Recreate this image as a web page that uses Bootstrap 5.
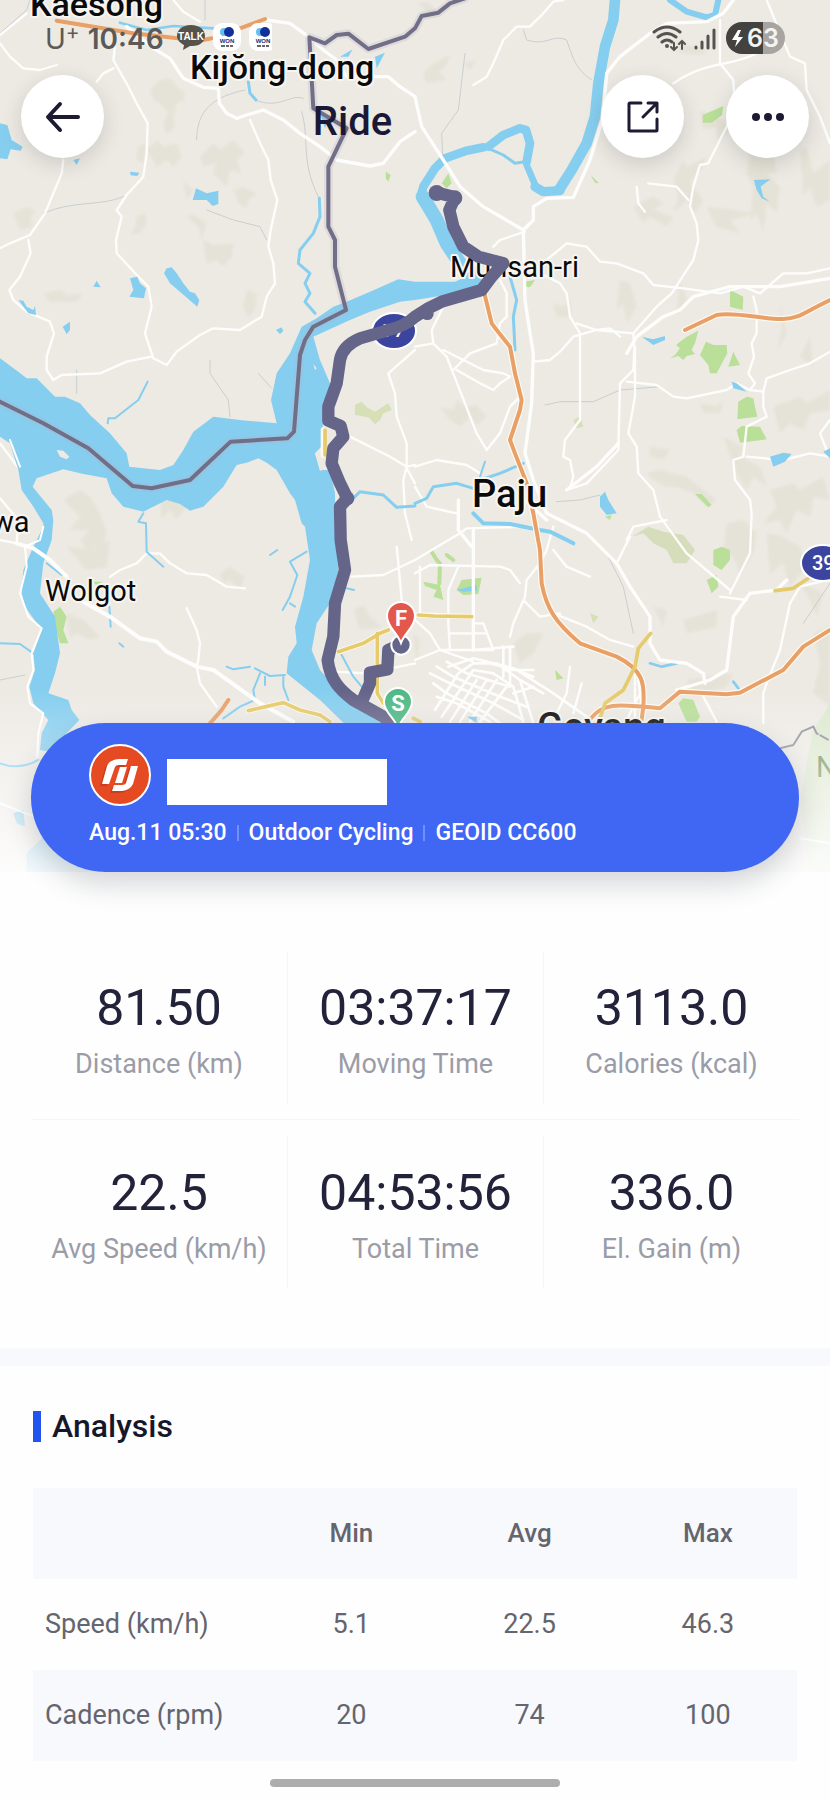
<!DOCTYPE html>
<html lang="en">
<head>
<meta charset="utf-8">
<meta name="viewport" content="width=device-width, initial-scale=1">
<title>Ride</title>
<link href="https://cdn.jsdelivr.net/npm/bootstrap@5.3.0/dist/css/bootstrap.min.css" rel="stylesheet">
<style>
  body { font-family: Roboto, sans-serif; color: #22233a; background: #fefefe; }
  .map-svg { background: #edeae4; }
  .map-svg text { font-family: Roboto, sans-serif; paint-order: stroke; stroke: #f7f5f1; stroke-width: 4px; stroke-linejoin: round; fill: #0a0a0a; }
  .map-svg text.on-fill { stroke: none; fill: #fff; }
  .map-svg text.park-name { fill: #6e8f58; stroke: none; }
  .town { font-size: 29px; }
  .city { font-size: 34px; font-weight: 500; }
  .city-lg { font-size: 38px; font-weight: 500; }
  .status-bar { height: 75px; padding: 21px 44px 0 45px; color: #5b5a58; }
  .status-bar .carrier { font: 400 28px/36px Inter, sans-serif; }
  .status-bar .clock { font: 600 28px/36px Inter, sans-serif; }
  .app-nav { padding: 0 21px; gap: 42px; }
  .round-btn { width: 83px; height: 83px; border: 0; background: #fff; color: #1c1b33; box-shadow: 0 6px 20px rgba(60, 60, 60, .18); }
  .screen-title { font-size: 40px; line-height: 48px; padding-top: 10px; font-weight: 500; color: #191936; }
  .ride-card { margin: -149px 31px 0; height: 149px; padding: 21px 58px 0; border-radius: 75px; background: #4066f4; color: #fff; box-shadow: 0 12px 28px rgba(40, 50, 60, .2); }
  .name-box { width: 220px; height: 46px; margin: 15px 0 0 16px; background: #fff; }
  .ride-meta { font-size: 23px; line-height: 28px; font-weight: 500; margin-top: 13px; gap: 10px; }
  .ride-meta .bar { width: 2px; height: 16px; background: #7390fa; }
  .stats { margin: 80px 31px 59px; }
  .stats .row + .row { border-top: 1px solid #f5f5f7; margin-top: 15px; padding-top: 15px; }
  .stat { height: 152px; padding-top: 28px; text-align: center; }
  .row + .row .stat { height: 154px; padding-top: 30px; }
  .stat + .stat { border-left: 1px solid #f5f5f7; }
  .stat dd { font-size: 50px; line-height: 56px; margin: 0; }
  .stat dt { font-size: 27px; line-height: 32px; margin-top: 12px; font-weight: 400; color: #9a9ca8; white-space: nowrap; }
  .section-gap { height: 18px; background: #f7f9fd; }
  .analysis { padding: 43px 33px 18px; }
  .analysis h2 { font-size: 32px; line-height: 34px; font-weight: 500; margin: 0 0 45px; gap: 11px; color: #17172b; }
  .analysis h2::before { content: ""; width: 8px; height: 31px; background: #2255f0; }
  .data-table { table-layout: fixed; width: 100%; font-size: 27px; line-height: 32px; color: #64656e; text-align: center; }
  .data-table th, .data-table td { height: 91px; padding: 0 12px 2px; }
  .data-table thead tr, .data-table tbody tr:nth-child(even) { background: #f7f9fd; }
  .data-table thead th { font-weight: 500; font-size: 26px; }
  .data-table tbody th { font-weight: 400; text-align: left; white-space: nowrap; }
  .data-table .lead-col { width: 30%; }
  .home-bar { width: 290px; height: 8px; border-radius: 4px; background: #adadad; margin-bottom: 12px; }
</style>
</head>
<body>
<header class="position-relative">
  <svg class="map-svg d-block w-100" viewBox="0 0 830 872" role="img" aria-label="Route map">
    <defs>
      <linearGradient id="fade" x1="0" y1="0" x2="0" y2="1"><stop offset="0" stop-color="#fefefe" stop-opacity="0"/><stop offset="1" stop-color="#fefefe" stop-opacity=".9"/></linearGradient>
      <filter id="soft" x="-20%" y="-20%" width="140%" height="140%"><feGaussianBlur stdDeviation="5"/></filter>
    </defs>
    <g transform="scale(.33333)" fill="none" stroke-linejoin="round" stroke-linecap="round">
      <!-- hill shading -->
      <g fill="#dfdccd" opacity=".55" filter="url(#soft)">
        <path d="M450 270L480 240 510 235 540 270 555 275 550 300 530 310 520 350 525 380 500 405 490 370 505 340 480 310 460 300ZM440 450L470 420 490 440 530 430 545 470 520 500 500 480 470 500ZM600 470L640 430 660 450 700 420 735 460 710 480 725 520 690 510 680 560 640 520 650 490 610 500ZM700 570L730 560 770 580 745 600 740 625 715 610ZM40 640L80 620 105 630 90 660 100 680 60 690ZM130 880L180 870 200 885 250 880 230 905 150 905ZM610 720L640 735 700 730 695 770 670 800 650 780 620 790ZM740 870L770 880 765 930 745 955 730 920ZM560 650L580 645 620 670 605 720 595 680ZM410 650L435 640 440 670 420 700 390 705 405 680ZM550 540L580 570 560 600ZM415 440L440 425 430 490 410 480Z"/>
        <path d="M1250 10L1280 5 1310 30 1300 50 1280 35ZM1270 220L1300 190 1350 165 1340 195 1315 215 1340 240 1280 250ZM1390 190L1430 180 1410 210ZM2020 540L2050 480 2060 500 2120 470 2110 500 2070 550 2110 600 2085 640 2060 600 2020 640 2035 590ZM2100 330L2170 360 2190 400 2150 420 2150 380 2110 390ZM2250 450L2290 470 2320 460 2330 520 2300 520 2340 560 2330 640 2300 610 2290 700 2270 640 2250 660 2260 560 2240 520ZM2400 450L2420 440 2440 520 2490 480V600L2450 620 2430 560 2410 590ZM2030 120L2080 140 2120 150 2110 165 2040 160ZM1900 620L1960 590 1990 610 1960 630 2020 650 2000 680 1950 650 1930 670ZM2120 620L2280 640 2190 660 2220 700 2150 680Z"/>
        <path d="M1320 1220L1360 1230 1370 1200 1400 1220 1430 1215 1460 1250 1430 1275 1410 1250 1380 1280 1350 1260ZM1860 840L1890 850 1910 920 1880 970 1870 910 1850 930ZM1940 1420L1980 1410 2060 1430 2150 1500 2120 1520 2080 1480 2030 1460 2000 1460 1960 1440ZM2170 1310L2230 1340 2220 1370 2280 1400 2300 1460 2260 1430 2240 1470 2210 1420ZM2320 1220L2400 1190 2420 1210 2490 1170V1230L2430 1240 2410 1290 2370 1270 2340 1300ZM2310 1470L2380 1450 2400 1470 2470 1430 2490 1500 2440 1490 2430 1550 2390 1530 2360 1600 2340 1560 2290 1570 2330 1520ZM2340 900L2360 1000 2330 1060 2345 990ZM2400 1070L2430 1010 2440 1100ZM1660 910L1690 920 1710 900 1710 950 1670 950ZM2100 1210L2150 1220 2170 1200 2160 1240 2110 1240ZM2040 840L2060 900 2030 950ZM1950 1340L2010 1350 1990 1380 1950 1370Z"/>
        <path d="M190 1500L240 1470 270 1490 300 1540 320 1600 310 1640 260 1650 240 1620 270 1590 210 1590 240 1550ZM200 1640L280 1650 330 1620 320 1700 260 1710ZM200 1840L250 1860 300 1910 270 1920 230 1900 210 1915ZM480 1500L520 1480 560 1520 530 1560 510 1530 485 1560ZM660 1720L690 1700 735 1730 720 1770 690 1740 670 1750ZM1060 1830L1090 1815 1110 1850 1145 1880 1080 1890ZM2180 1570L2230 1560 2270 1600 2260 1660 2220 1720 2200 1670 2170 1660ZM1540 1930L1580 1900 1630 1900 1600 1960 1560 1990ZM2440 1900L2490 1880V2120L2440 2080 2460 1990ZM2400 1750L2470 1780 2450 1850 2430 1800ZM2300 1600L2350 1610 2400 1640 2420 1700 2370 1760 2350 1690 2310 1720ZM1960 1820L2000 1830 1990 1880ZM2050 1860L2150 1830 2150 1880 2060 1900ZM2060 2040L2200 2020 2180 2060 2080 2090ZM1240 1900L1260 1920 1250 1990Z"/>
      </g>
      <!-- parks -->
      <g fill="#b9df98">
        <path d="M2108 345L2170 318 2166 345 2135 368 2108 368ZM1325 550L1345 520 1355 550 1340 565ZM1772 525L1797 550 1785 548ZM1158 515L1172 525 1165 545 1157 535Z"/>
        <path d="M2010 1075L2025 1065 2040 1045 2028 1035 2060 1010 2095 992 2085 1030 2075 1050 2085 1062 2060 1068 2050 1080 2035 1068ZM2100 1065L2118 1025 2140 1035 2180 1035 2182 1060 2150 1120 2130 1120 2125 1095ZM2200 1055L2220 1095 2185 1100ZM2190 870L2230 890 2228 930 2190 920ZM2215 1205L2240 1190 2260 1195 2265 1220 2272 1250 2212 1258ZM2210 1290L2225 1278 2280 1280 2300 1318 2220 1328ZM2085 1482L2105 1482 2135 1515 2125 1522ZM1576 845L1605 840 1590 862 1576 860ZM1815 1550L1835 1545 1830 1560Z"/>
        <path d="M2140 1650L2165 1640 2190 1650 2190 1680 2165 1710 2140 1695ZM2120 1740L2150 1725 2155 1760 2135 1780ZM1385 1740L1445 1733 1435 1782 1390 1785 1370 1770ZM1270 1745L1320 1755 1330 1800 1300 1790 1310 1770 1275 1758ZM2035 2110L2050 2095 2080 2100 2100 2150 2090 2165 2060 2165ZM160 1835L180 1820 200 1850 190 1890 205 1930 180 1930 165 1880ZM280 1745L305 1745 300 1770ZM1665 2010L1690 2035 1670 2040Z"/>
        <path d="M1295 1655L1310 1680 1320 1690 1318 1750M1340 1665L1360 1680" stroke="#b9df98" stroke-width="12" fill="none"/>
        <path d="M2440 2190L2480 2130 2490 2100V2616H2430L2400 2400 2420 2290Z" fill="#dce8cf"/>
        <path d="M1065 1215L1085 1205 1100 1222 1125 1235 1165 1210 1175 1230 1150 1240 1140 1260 1125 1272 1105 1252 1065 1245Z" fill="#d6dfb6"/>
        <path d="M1895 1610L1945 1580 1990 1595 2050 1605 2085 1650 2060 1690 2020 1690 2000 1650 1960 1630 1930 1600Z" fill="#d6ddbb"/>
        <path d="M1720 1260L1740 1250 1750 1280 1730 1285ZM1770 1840L1795 1850 1780 1870Z" fill="#d6dfb6"/>
        <path d="M150 2140L175 2160 155 2185Z" fill="#cfe39a"/>
      </g>
      <!-- small streams and admin lines -->
      <g stroke="#c9ced0" stroke-width="3">
        <path d="M0 100L80 30 90 0M615 0V60M590 420C590 330 640 290 735 270M765 300C840 330 870 280 910 295M905 335C930 420 900 480 955 590M130 640C220 600 300 620 370 590M620 630L700 660 780 680 800 720M230 1110V1180M630 1080V1120L685 1200 690 1250M775 1120L815 1165M0 2040L75 2025M1395 160L1375 330 1325 400 1328 465M1570 90L1580 120C1640 140 1660 100 1700 120 1720 180 1730 210 1775 240M1635 1215L1680 1205 1780 1205 1860 1170 1980 1160M1670 1505L1740 1500 1800 1485M1825 1670L1870 1760 1900 1900M2410 1870L2490 1750"/>
      </g>
      <!-- minor roads -->
      <g stroke="#fdfdfc" stroke-width="7">
        <path d="M0 105L80 40M0 130L30 170 70 205 120 210 170 195M345 140L340 180 385 260 410 310 443 370 440 460 430 530 380 585 350 630 365 650 348 720 350 760 415 830 445 860 455 920 435 1000 460 1075 500 1095 530 1055 600 1005 640 985 720 990 785 950 800 890 825 850 820 790 805 740 812 690 832 600 812 540 805 480 780 430 750 360M190 480L185 520 135 640 90 705 30 730 0 745M290 245L310 220 340 205M520 0L550 35 600 65M85 720L92 760 60 830 28 870 40 900 80 935 150 965 162 1000 140 1070 140 1110 160 1140 185 1125 300 1120 380 1085 455 1070"/>
        <path d="M1690 0L1660 5 1630 40 1590 80 1550 80 1510 120 1480 190 1460 230 1420 255M2300 0L2370 170 2415 190 2420 270 2460 350 2490 430M2160 60V190L2200 240 2205 330 2170 400 2125 490 2100 495 2080 560 2070 620 2090 670 2095 720 2080 780 2015 880M1910 560L1915 610 1935 635M1945 550L2030 560 2065 600M1575 695L1500 720 1480 740M2020 250C2120 180 2200 200 2270 160M1640 780L1700 730 1760 740 1800 785 1850 790 1930 820 1960 855 2050 865 2160 880 2230 860 2280 880 2350 820 2420 820 2490 805M1620 820L1680 850 1700 880 1710 950 1740 1000 1740 1260 1695 1320 1690 1370 1710 1380 1720 1430 1710 1465M1600 1085L1650 1080 1680 1055 1720 1010 1790 990 1830 985 1860 1010M1730 970L1790 990 1900 1000 1970 920 2015 880M1900 1000L1903 1040 1900 1110 1860 1150 1855 1350 1760 1450 1700 1470M1905 1040V1190L1885 1300 1910 1340 1915 1420 1960 1470 1980 1550 2060 1660 2190 1770M1880 1145L1970 1155 2020 1190 2060 1195 2180 1170 2210 1150 2250 1170 2290 1175 2300 1135 2370 1110 2430 1090 2490 1055M2260 890L2270 930 2270 1000 2255 1030 2262 1070 2245 1120 2265 1150 2250 1170M2290 1175L2290 1220 2300 1250 2240 1280 2230 1370 2200 1380 2205 1440 2250 1500 2255 1540 2250 1660 2230 1700 2190 1780M2240 1370L2350 1380 2430 1360 2490 1370M2490 1260L2460 1300 2480 1350"/>
        <path d="M1245 1040L1300 1030 1295 990 1340 900M1300 1030L1340 1070 1430 1300 1460 1350 1500 1300 1530 1220 1560 1190M1330 1050L1450 1110 1510 1120 1530 1130 1500 1150 1480 1170 1440 1150 1370 1110M1360 1110L1410 1060 1490 1030 1500 970 1520 950 1520 880 1500 840M1245 1400L1310 1380 1400 1395 1440 1420M1245 1460L1280 1520 1370 1540M1880 1620L1900 1580 2000 1560M2160 1790L2240 1800"/>
        <path d="M0 1495L55 1560 50 1630 0 1620M0 1330L60 1410M330 1730L360 1710 410 1690 440 1660 480 1660 510 1690 560 1720 620 1725 680 1760 735 1765M560 1825L590 1890 600 1930 595 1980 590 2000 600 2050 650 2120M1055 1730L1150 1725 1245 1680M1190 1640L1195 1690 1205 1800M1245 1050L1165 1120 1185 1180 1190 1250 1220 1330 1220 1400 1210 1440 1215 1540 1235 1620M1050 1310L1130 1350 1170 1370 1220 1400 1245 1395M1220 1405L1245 1450M1000 2015L1100 2020 1245 1990M1245 1680L1380 1600 1400 1585 1590 1580M1245 1720L1290 1695 1500 1700 1530 1710 1560 1750M1375 1700L1345 1770 1345 1870 1350 1950M1260 1700V1850M1350 1900H1460M1425 1870H1450L1480 1950M1660 1650L1700 1700 1770 1730M1245 1860L1290 1900 1320 1950 1420 1985M1245 1980L1320 1950 1480 1950M1660 1580L1640 1650 1620 1690 1580 1740 1575 1790 1540 1870 1530 1910M1660 1840L1760 1880 1830 1920 1900 1940M1570 1800L1620 1850 1680 1840M1710 2000L1700 2080 1670 2140M1745 2050L1720 2140M1850 1690L1890 1610M2480 1740L2400 1760 2370 1810 2340 1950 2300 2050 2290 2080 2290 2170M2110 2090L2150 2165"/>
        <path d="M1905 2000V2160M1915 2040L1930 2160M1885 2150L1930 2060"/>
      </g>
      <!-- dense street grid of the new town -->
      <g stroke="#fdfdfc" stroke-width="8">
        <path d="M1305 2130L1375 2020 1420 1990 1490 1990 1560 2040 1600 2170M1325 2150L1400 2040 1420 2010 1480 2020 1540 2060 1570 2165M1350 2165L1430 2040M1380 2165L1460 2040M1410 2165L1490 2040M1440 2165L1520 2060M1290 2020L1350 2050 1480 2110 1570 2160M1310 2000L1360 2030 1500 2090 1580 2120M1340 1985L1400 2020 1530 2060M1300 2050L1340 2080 1460 2140 1500 2170M1310 2090L1370 2110 1470 2165M1345 2000L1420 1975 1540 2005 1600 2030M1530 1940V2050M1510 1940V2030M1420 1950L1540 1940M1510 2010L1600 2010M1450 1985L1550 2010 1660 2080 1760 2150M1560 2040L1630 2080M1540 2080L1600 2060"/>
      </g>
      <!-- water -->
      <path fill="#86ceef" d="M0 1075L55 1115 80 1135 110 1135 165 1190 195 1190 240 1210 270 1245 330 1300 380 1360 388 1400 480 1410 520 1395 550 1350 580 1295 640 1250 720 1260 830 1270 813 1200 830 1120 870 1060 905 980 950 955 1000 920 1040 905 1110 875 1195 838 1245 845 1365 845 1430 815 1470 860 1430 875 1305 890 1245 900 1200 905 1110 935 1050 960 940 1010 960 1080 990 1150 970 1250 965 1340 945 1360 960 1410 990 1410 1005 1480 1005 1600 1015 1710 990 1810 950 1870 935 1950 960 2010 1040 2100 1180 2170 1180 2200 1060 2200 1030 2168 960 2100 860 2020 865 1970 890 1930 885 1880 910 1790 930 1680 915 1580 905 1570 885 1500 870 1480 830 1410 800 1388 775 1375 740 1388 710 1395 670 1460 610 1520 570 1532 540 1512 500 1500 430 1535 370 1520 335 1480 320 1435 250 1422 190 1408 110 1435 98 1460 155 1530 160 1560 155 1620 130 1690 120 1780 165 1850 180 1960 165 2020 145 2080 205 2100 215 2130 238 2160 200 2200 170 2260 120 2250 125 2200 145 2160 100 2110 88 2060 105 2010 100 1960 125 1890 75 1820 65 1780 70 1710 100 1640 130 1580 130 1570 100 1520 65 1470 55 1410 30 1330 0 1310Z"/>
      <g fill="#edeae4"><path d="M170 1350L190 1352 208 1370 200 1378 180 1370ZM940 1092L950 1105 945 1110ZM945 1360L965 1340 985 1345 990 1405 960 1412Z"/></g>
      <g stroke="#86ceef">
        <path stroke-width="32" d="M1845 0L1840 60 1815 140 1795 250 1785 350 1760 430 1715 510 1680 565"/>
        <path stroke-width="28" d="M1680 572L1630 575 1605 560"/>
        <path stroke-width="20" d="M1610 565L1580 495"/>
        <path stroke-width="26" d="M1580 485L1590 430 1578 390 1560 385 1510 405 1465 440"/>
        <path stroke-width="26" d="M1450 442L1400 452 1335 475 1305 505 1270 560 1262 590"/>
        <path stroke-width="42" d="M1268 590L1310 660 1340 730 1380 790 1430 830"/>
        <path stroke-width="9" d="M1465 445L1510 465 1545 490 1575 485"/>
        <path stroke-width="18" d="M2010 0L2060 35 2120 52 2145 45 2155 0"/>
        <path stroke-width="9" d="M958 595L960 650 940 700 900 750 895 790 930 820 915 850 930 880 915 905 945 940M745 245L750 280 768 300M1530 830L1550 900 1540 950 1545 1050M1245 1510L1280 1495 1300 1460 1370 1450 1420 1465M1440 1440L1500 1420 1570 1390M1060 1495L1080 1475 1150 1485 1190 1522 1245 1518"/>
        <path stroke-width="12" d="M1420 1540L1450 1570 1530 1572 1620 1590 1650 1595 1720 1630"/>
        <path stroke-width="6" d="M1440 1430L1455 1385M443 1145L415 1200 345 1255 325 1255 323 1270M430 1540L415 1565 438 1570 440 1655 490 1700M920 1655L870 1685 892 1725 870 1790 848 1830M870 1810L885 1820M810 1665L832 1650M0 1930L60 1932 100 1960M140 1690L185 1725M328 1820L332 1880M358 1930L370 1940M680 2000L700 2008 750 2000M765 2005L810 2028 855 2025M780 2020L760 2070 765 2100 720 2120 670 2155M850 2030L850 2060 865 2100M795 2030V2055M1025 1965L1060 2030 1085 2060M1040 1765L1062 1770M0 2290C40 2305 80 2300 115 2280"/>
        <path stroke-width="8" d="M360 68L440 90 520 78 640 85M1950 1990L1985 2000 2030 1990M2200 2045L2215 2065"/>
      </g>
      <g fill="#86ceef"><path d="M0 370L22 375 35 420 68 440 62 452 32 448 22 478 0 475ZM220 480L240 475 230 495ZM390 515L418 518 412 528 392 526ZM588 565L620 580 655 572 655 612 638 618 620 600 578 600ZM500 805L515 802 530 820 550 850 570 875 585 880 598 900 592 920 545 880 510 850 492 820ZM390 835L412 830 420 850 438 865 432 895 388 890 400 870ZM280 860L290 842 302 862ZM55 900L70 902 80 920 100 930 105 918 108 945 85 940ZM188 980L210 965 210 990 200 1003ZM828 990L845 982 850 993 840 1002ZM1020 170L1058 148 1045 170ZM1125 170L1155 158 1130 205ZM960 340L990 350 975 385ZM2262 540L2312 538 2295 550 2282 560 2290 590 2310 605 2285 595 2270 570ZM1925 1010L1960 1018 1995 1008 1995 1020 1960 1035ZM1800 1490L1815 1475 1825 1500 1850 1540 1820 1545 1800 1520ZM2195 1145L2210 1150 2240 1175 2200 1165ZM2310 1370L2350 1358 2375 1362 2355 1385 2320 1400ZM2470 1355L2490 1345V1375ZM1370 1770L1430 1755 1430 1773 1390 1775ZM1400 2150L1430 2150 1430 2168ZM40 2440L70 2430 75 2480 50 2470ZM80 2560L130 2510 330 2600 330 2616 80 2616Z"/></g>
      <!-- main white roads -->
      <g stroke="#fdfdfc" stroke-width="10">
        <path d="M380 80L460 145 510 175 550 235 610 262 655 265 658 310 680 340 710 355 740 345 790 330 850 360 900 400 960 440 1010 480 1110 498 1150 490 1200 425 1245 395M800 60L870 70 925 110 970 150 1010 180 1040 230 1165 230 1200 260 1245 290M1245 290L1265 380 1330 480 1380 560 1450 620 1570 690 1575 900 1590 1000 1600 1060 1595 1210 1575 1360 1600 1440 1640 1540 1760 1600 1850 1690 1890 1760 1950 1850 1950 1930 1980 1980 2060 1990 2110 2020 2115 2050M1570 690L1600 660 1600 620 1640 595 1720 592 1770 480 1810 350 1820 220 1860 170 1950 100 2000 70 2120 65 2170 40 2200 0M1575 1500L1640 1560M1880 1060L1910 1010 1990 950 2040 930 2080 890 2190 860 2340 860 2490 835M1420 1590V1950M1375 1500V1590L1415 1640M1700 1470L1790 1400 1855 1330"/>
        <path d="M2130 2040L2030 2070M2130 2040L2180 2010 2200 1850 2250 1780 2330 1770 2360 1740"/>
        <path d="M50 1630L100 1645 150 1680 200 1730M240 1800L330 1850 420 1915 470 1925 500 1955 590 2000 640 2010 780 2110 880 2165" stroke-width="12"/>
      </g>
      <g stroke="#fff" stroke-width="6"><path d="M0 2410C60 2430 100 2460 130 2440M2400 2515L2490 2530M130 1580L120 1620 75 1640 80 1700 60 1780 85 1850 125 1885 95 1960 100 2010 82 2060 90 2110 130 2140 115 2200 112 2270M30 1320L60 1400"/></g>
      <!-- highways with pale casing -->
      <g stroke="#fffaf2" stroke-width="19"><path d="M1415 880L1445 970 1475 1005 1530 1040"  stroke="none"/><path d="M1620 875L1640 880" stroke="none"/><path d="M2055 990L2150 945C2210 935 2300 960 2350 957 2400 955 2410 938 2490 900"/></g>
      <g stroke="#fffaf2" stroke-width="19"><path d="M1453 880L1475 970 1490 990 1530 1040 1545 1120 1565 1200 1560 1230 1530 1320 1545 1360 1580 1450 1600 1540 1620 1650 1625 1750C1640 1830 1670 1870 1740 1930L1850 1970C1930 2010 1935 2050 1930 2120L1925 2160M1770 2158C1810 2110 1840 2110 1980 2125L2040 2075 2180 2083 2220 2078 2350 2010 2410 1940 2490 1890"/></g>
      <g stroke="#e8a067" stroke-width="12"><path d="M1453 880L1475 970 1490 990 1530 1040 1545 1120 1565 1200 1560 1230 1530 1320 1545 1360 1580 1450 1600 1540 1620 1650 1625 1750C1640 1830 1670 1870 1740 1930L1850 1970C1930 2010 1935 2050 1930 2120L1925 2160M1770 2158C1810 2110 1840 2110 1980 2125L2040 2075 2180 2083 2220 2078 2350 2010 2410 1940 2490 1890M2055 990L2150 945C2210 935 2300 960 2350 957 2400 955 2410 938 2490 900M170 62L400 100 600 122 635 115M720 85L795 57M630 2170L665 2130 685 2100"/></g>
      <g stroke="#fffaf0" stroke-width="16"><path d="M745 2132L850 2108 900 2130 960 2145 990 2165M1255 1845L1415 1850M1015 1955L1090 1930 1140 1900 1165 1890M1132 1900V2080L1150 2110M970 1290V1365"/></g>
      <g stroke="#e5cb6c" stroke-width="11"><path d="M745 2132L850 2108 900 2130 960 2145 990 2165M1255 1845L1300 1848 1415 1850M1015 1955L1090 1930 1140 1900 1165 1890M1132 1900V2080L1150 2110M975 1290V1365M1952 1900L1915 1945 1905 2000 1870 2070 1815 2110 1800 2155M2325 1772L2380 1765 2425 1735M1240 2155L1260 2165"/></g>
      <!-- border line -->
      <g>
        <path stroke="#b9b0c4" stroke-opacity=".25" stroke-width="26" d="M1395 -5L1350 10 1315 38 1265 48 1245 85 1215 110 1105 147 1045 101 1010 105 975 130 928 112 940 325 1040 385 985 500 985 680 1005 720 1005 800 1038 930 940 980 915 1020 900 1065 882 1295 862 1315 692 1325 570 1440 455 1465 398 1458 265 1345 130 1270 -5 1203"/>
        <path stroke="#716f87" stroke-width="12" d="M1395 -5L1350 10 1315 38 1265 48 1245 85 1215 110 1105 147 1045 101 1010 105 975 130 928 112 940 325 1040 385 985 500 985 680 1005 720 1005 800 1038 930 940 980 915 1020 900 1065 882 1295 862 1315 692 1325 570 1440 455 1465 398 1458 265 1345 130 1270 -5 1203"/>
        <path stroke="#8d8f96" stroke-width="6" d="M2340 2245L2380 2235 2405 2195 2440 2180"/>
        <path stroke="#8d8f96" stroke-width="6" stroke-dasharray="26 9" d="M2440 2180L2450 2200 2490 2222"/>
      </g>
    </g>
    <g>
      <text class="town" x="450" y="277">Munsan-ri</text>
      <g stroke="#fff" stroke-width="2" fill="#3b459f"><ellipse cx="394" cy="331" rx="22" ry="18"/><ellipse cx="823" cy="563" rx="22" ry="18"/></g>
      <text class="on-fill" x="383" y="337" font-size="19" font-weight="500">77</text>
      <text class="on-fill" x="812" y="570" font-size="20" font-weight="500">39</text>
    </g>
    <!-- recorded route -->
    <g transform="scale(.33333)" fill="none" stroke="#656489" stroke-width="37" stroke-linecap="round" stroke-linejoin="round">
      <path d="M1312 578L1365 592 1348 630 1360 680 1390 740 1435 770 1510 790 1475 830 1445 870 1325 905 1285 925 1245 950C1215 978 1190 982 1150 995L1080 1015C1045 1030 1025 1050 1020 1080L1010 1150 985 1220 985 1262 1022 1278 1030 1310 1000 1345 995 1390 1020 1450 1042 1495 1020 1520 1022 1620 1035 1710 1005 1810 1000 1910 983 1980C990 2040 1020 2070 1060 2100L1150 2150 1185 2180M1088 2100L1110 2050 1110 2018 1162 2008 1165 1950 1200 1935"/>
      <g fill="#656489" stroke="none"><circle cx="1310" cy="579" r="24"/><circle cx="1364" cy="594" r="23"/><circle cx="1282" cy="941" r="19"/><circle cx="1041" cy="1495" r="22"/></g>
      <circle cx="1203" cy="1935" r="29" fill="#656489" stroke="#fff" stroke-width="6"/>
    </g>
    <g>
      <g stroke="#fff" stroke-width="2">
        <path fill="#e4574d" d="M401 643C397 632 387 627 387 616A14 14 0 0 1 415 616C415 627 405 632 401 643Z"/>
        <path fill="#4fb985" d="M398 728C394 717 384 712 384 702A14 14 0 0 1 412 702C412 712 402 717 398 728Z"/>
      </g>
      <text class="on-fill" x="401" y="626" font-size="22" font-weight="700" text-anchor="middle">F</text>
      <text class="on-fill" x="398" y="711" font-size="22" font-weight="700" text-anchor="middle">S</text>
      <text class="city" x="30" y="16">Kaesong</text>
      <text class="city" x="190" y="79">Kijŏng-dong</text>
      <text class="city-lg" x="472" y="507">Paju</text>
      <text class="city-lg" x="537" y="740">Goyang</text>
      <text class="town" x="-8" y="532">wa</text>
      <text class="town" x="45" y="601">Wolgot</text>
      <text class="town park-name" x="816" y="777">N</text>
    </g>
    <rect y="690" width="830" height="182" fill="url(#fade)"/>
  </svg>

  <div class="position-absolute top-0 start-0 w-100">
    <div class="status-bar d-flex align-items-start">
      <span class="carrier">U<sup>+</sup></span>
      <span class="clock ms-2">10:46</span>
      <svg class="ms-2" width="100" height="30" viewBox="172 22 100 30" aria-hidden="true">
        <path fill="#55524c" d="M191 26C182 26 177 31 177 37C177 41 180 44 184 46L183 51 190 47C200 48 205 42 205 37C205 31 200 26 191 26Z"/>
        <text x="191" y="41" font-family="Liberation Sans, sans-serif" font-size="10" font-weight="700" fill="#fff" text-anchor="middle">TALK</text>
        <g id="won"><rect x="213" y="24" width="28" height="28" rx="9" fill="#fff"/><circle cx="224" cy="33" r="4" fill="#63bff0"/><circle cx="229" cy="33" r="5" fill="#12309c"/>
        <text x="227" y="44" font-family="Liberation Sans, sans-serif" font-size="6" font-weight="700" fill="#1b2d7c" text-anchor="middle">WON</text><path d="M221 47h4m1 0h3m1 0h3" stroke="#666" stroke-width="2"/></g>
        <use href="#won" x="36"/>
      </svg>
      <svg class="ms-auto" width="134" height="36" viewBox="652 20 134 36" aria-hidden="true">
        <g fill="none" stroke="#55534f" stroke-width="3" stroke-linecap="round"><path d="M654 31Q667 21 680 31M658 36Q667 29 676 36M662 41Q667 37 672 41"/><path stroke-width="2" d="M674 42V49M671 46L674 49 677 46M682 48V40M679 43L682 40 685 43"/>
        <path d="M696 46V47M702 41V47M708 35V47M714 29V47"/></g><circle cx="667" cy="45" r="2" fill="#55534f"/>
        <path fill="#43423f" d="M763 21H742A16 16 0 0 0 742 53H763Z"/><path fill="#a6a5a1" d="M763 21H769A16 16 0 0 1 769 53H763Z"/>
        <path fill="#fff" d="M738 29L732 39H737L735 46 743 36H738L741 29Z"/>
        <text x="763" y="46" font-family="Inter, sans-serif" font-size="25" font-weight="600" fill="#f4f4f2" text-anchor="middle">63</text>
      </svg>
    </div>
    <nav class="app-nav d-flex align-items-center" aria-label="Ride actions">
      <button type="button" class="round-btn rounded-circle d-flex align-items-center justify-content-center p-0" aria-label="Back">
        <svg width="36" height="32" viewBox="0 0 36 32" fill="none" stroke="currentColor" stroke-width="4" stroke-linecap="round" stroke-linejoin="round"><path d="M33 16H4M15 3L3 16 15 29"/></svg>
      </button>
      <h1 class="screen-title flex-grow-1 text-center m-0">Ride</h1>
      <button type="button" class="round-btn rounded-circle d-flex align-items-center justify-content-center p-0" aria-label="Share">
        <svg width="34" height="34" viewBox="0 0 34 34" fill="none" stroke="currentColor" stroke-width="3" stroke-linecap="round" stroke-linejoin="round"><path d="M15 3H4Q3 3 3 4V30Q3 31 4 31H30Q31 31 31 30V19M22 3H31V12M31 3L17 17"/></svg>
      </button>
      <button type="button" class="round-btn rounded-circle d-flex align-items-center justify-content-center p-0" aria-label="More">
        <svg width="34" height="8" viewBox="0 0 34 8" fill="currentColor"><circle cx="5" cy="4" r="4"/><circle cx="17" cy="4" r="4"/><circle cx="29" cy="4" r="4"/></svg>
      </button>
    </nav>
  </div>
</header>

<main>
  <section class="ride-card position-relative" aria-label="Ride details">
    <div class="d-flex align-items-start">
      <svg width="62" height="62" viewBox="0 0 62 62" role="img" aria-label="Rider avatar">
        <circle cx="31" cy="31" r="30" fill="#e64a22" stroke="#fff" stroke-width="2"/>
        <g fill="#a9321a" opacity=".5" transform="translate(-2 2)"><path d="M39 15H30Q20 16 18 22L13 40H20L26 23Q27 21 30 21H37Z"/><path d="M49 22H42L37 39Q36 41 33 41H25L23 47H33Q41 46 44 40Z"/></g>
        <g fill="#fff"><path d="M39 15H30Q20 16 18 22L13 40H20L26 23Q27 21 30 21H37Z"/><path d="M49 22H42L37 39Q36 41 33 41H25L23 47H33Q41 46 44 40Z"/><path d="M31 23H38L33 39H26Z"/></g>
      </svg>
      <div class="name-box"></div>
    </div>
    <div class="ride-meta d-flex align-items-center text-nowrap">
      <span>Aug.11 05:30</span><span class="bar"></span><span>Outdoor Cycling</span><span class="bar"></span><span>GEOID CC600</span>
    </div>
  </section>

  <section class="stats" aria-label="Summary">
    <dl class="row g-0 m-0">
      <div class="col-4 stat d-flex flex-column-reverse justify-content-end"><dt>Distance (km)</dt><dd>81.50</dd></div>
      <div class="col-4 stat d-flex flex-column-reverse justify-content-end"><dt>Moving Time</dt><dd>03:37:17</dd></div>
      <div class="col-4 stat d-flex flex-column-reverse justify-content-end"><dt>Calories (kcal)</dt><dd>3113.0</dd></div>
    </dl>
    <dl class="row g-0 mx-0 mb-0">
      <div class="col-4 stat d-flex flex-column-reverse justify-content-end"><dt>Avg Speed (km/h)</dt><dd>22.5</dd></div>
      <div class="col-4 stat d-flex flex-column-reverse justify-content-end"><dt>Total Time</dt><dd>04:53:56</dd></div>
      <div class="col-4 stat d-flex flex-column-reverse justify-content-end"><dt>El. Gain (m)</dt><dd>336.0</dd></div>
    </dl>
  </section>

  <div class="section-gap"></div>

  <section class="analysis">
    <h2 class="d-flex align-items-center">Analysis</h2>
    <table class="data-table">
      <thead><tr><th class="lead-col"></th><th scope="col">Min</th><th scope="col">Avg</th><th scope="col">Max</th></tr></thead>
      <tbody>
        <tr><th scope="row">Speed (km/h)</th><td>5.1</td><td>22.5</td><td>46.3</td></tr>
        <tr><th scope="row">Cadence (rpm)</th><td>20</td><td>74</td><td>100</td></tr>
      </tbody>
    </table>
  </section>
  <div class="home-bar mx-auto"></div>
</main>
<script src="https://cdn.jsdelivr.net/npm/bootstrap@5.3.0/dist/js/bootstrap.bundle.min.js"></script>
</body>
</html>
